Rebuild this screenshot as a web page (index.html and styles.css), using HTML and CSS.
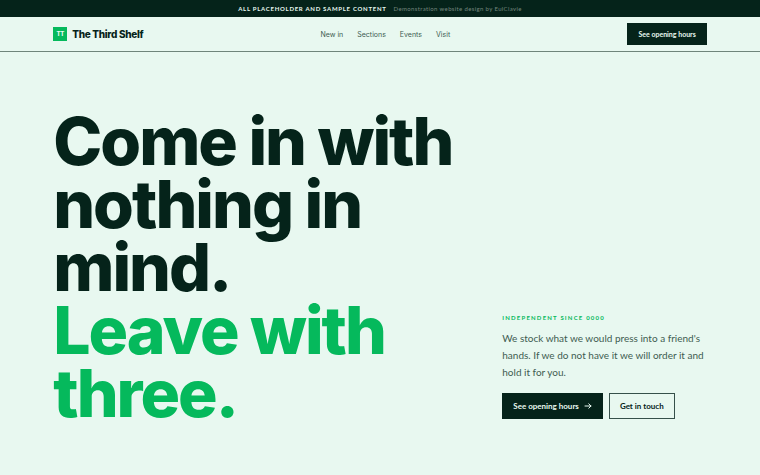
FILE: index.html
```html
<!DOCTYPE html>
<html lang="en">
<head>
<meta charset="UTF-8">
<meta name="viewport" content="width=device-width, initial-scale=1.0">
<title>The Third Shelf</title>
<link rel="stylesheet" href="styles.css">
</head>
<body>
<div class="notice">
    <strong>All placeholder and sample content</strong>
    <span>Demonstration website design by EulClavie</span>
</div>
<header class="header">
    <a class="brand" href="#"><span class="mark">TT</span>The Third Shelf</a>
    <nav class="nav">
        <a href="#new">New in</a>
        <a href="#sections">Sections</a>
        <a href="#events">Events</a>
        <a href="#visit">Visit</a>
    </nav>
    <button type="button" class="btn btn-small">See opening hours</button>
</header>
<main class="hero">
    <h1>Come in with nothing in mind. <span>Leave with three.</span></h1>
    <div class="intro">
        <p class="eyebrow">Independent since 0000</p>
        <p class="lead">We stock what we would press into a friend's hands. If we do not have it we will order it and hold it for you.</p>
        <div class="actions">
            <button type="button" class="btn">See opening hours
                <svg width="8" height="8" viewBox="0 0 8 8" fill="none" stroke="currentColor" stroke-width="1" stroke-linecap="round" stroke-linejoin="round" aria-hidden="true"><path d="M1 4h6M4.8 1.8 7 4 4.8 6.2"/></svg>
            </button>
            <button type="button" class="btn btn-outline">Get in touch</button>
        </div>
    </div>
</main>
</body>
</html>
```

FILE: styles.css
```css
* {
    box-sizing: border-box;
}
body {
    margin: 0;
    font-family: Lato, "Liberation Sans", sans-serif;
    background-color: #e8f8f0;
    color: #05231a;
}
a {
    color: inherit;
    text-decoration: none;
}
.notice {
    display: flex;
    justify-content: center;
    gap: 7px;
    background-color: #05231a;
    color: #e8f8f0;
    font-size: 6px;
    line-height: 17px;
    letter-spacing: 0.06em;
}
.notice strong {
    letter-spacing: 0.12em;
    text-transform: uppercase;
}
.notice span {
    color: #74877e;
}
.header {
    display: flex;
    justify-content: space-between;
    align-items: center;
    padding: 6px 7%;
    border-bottom: 1px solid #6f857b;
}
.brand {
    display: flex;
    align-items: center;
    gap: 5px;
    font-family: Inter, sans-serif;
    font-size: 10px;
    font-weight: 800;
    letter-spacing: -0.03em;
}
.mark {
    width: 14px;
    background-color: #05b95c;
    color: #e8f8f0;
    font-size: 6px;
    line-height: 14px;
    text-align: center;
}
.nav {
    display: flex;
    gap: 14px;
    color: #405c50;
    font-family: Inter, sans-serif;
    font-size: 7px;
}
.btn {
    display: flex;
    align-items: center;
    gap: 5px;
    padding: 0 10px;
    border: 1px solid #05231a;
    background-color: #05231a;
    color: #e8f8f0;
    font-family: inherit;
    font-size: 8px;
    font-weight: 700;
    line-height: 24px;
}
.btn-small {
    font-size: 7px;
    line-height: 20px;
}
.btn-outline {
    border-color: #36504a;
    background-color: transparent;
    color: #05231a;
}
.hero {
    display: grid;
    grid-template-columns: 2fr 1fr;
    align-items: end;
    gap: 40px;
    padding: 58px 7% 48px;
}
h1 {
    margin: 0;
    font-family: Inter, sans-serif;
    font-size: 66px;
    font-weight: 800;
    line-height: 63px;
    letter-spacing: -2px;
}
h1 span {
    display: block;
    color: #05b95c;
}
.intro {
    padding-bottom: 6px;
}
.eyebrow {
    margin: 0 0 7px;
    color: #05b95c;
    font-size: 6px;
    font-weight: 700;
    line-height: 10px;
    letter-spacing: 0.2em;
    text-transform: uppercase;
}
.lead {
    margin: 0 0 12px;
    color: #405c50;
    font-size: 10px;
    line-height: 17px;
}
.actions {
    display: flex;
    gap: 6px;
}
```
